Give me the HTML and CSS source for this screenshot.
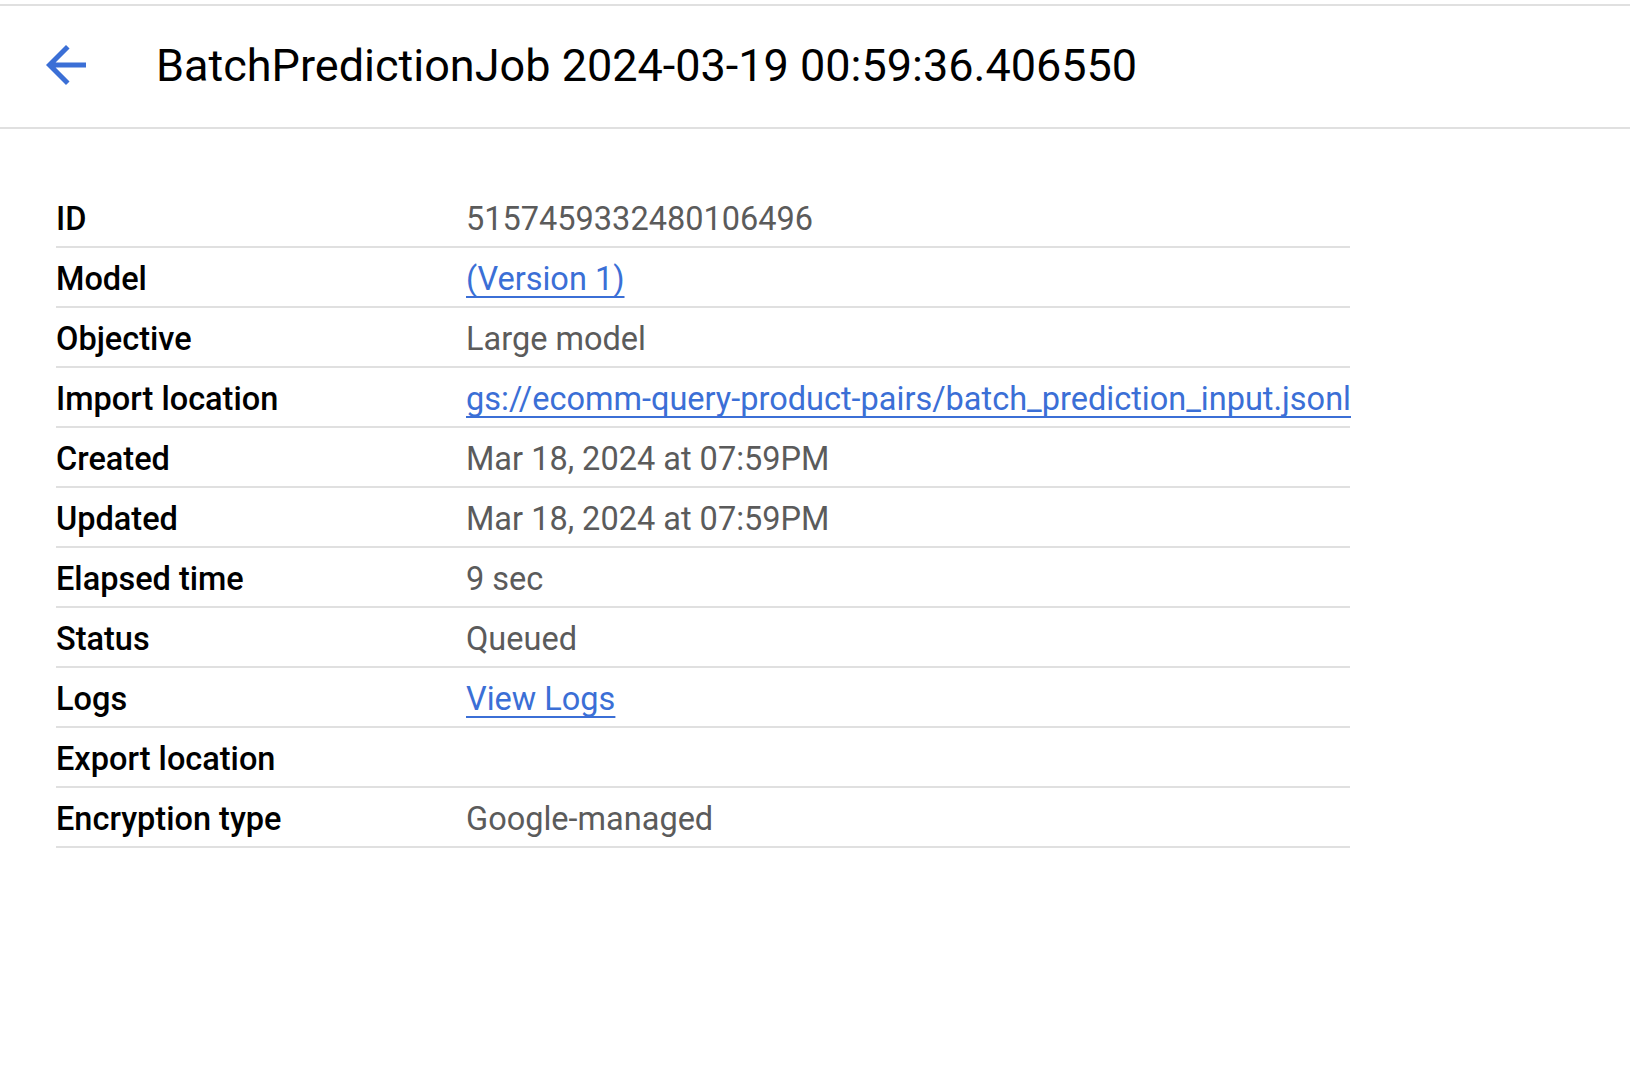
FILE: index.html
```html
<!DOCTYPE html>
<html lang="en">
<head>
<meta charset="utf-8">
<title>BatchPredictionJob</title>
<link rel="stylesheet" href="styles.css">
</head>
<body>
<header class="header">
  <a class="back" href="#" aria-label="Back">
    <svg viewBox="0 0 24 24" width="60" height="60"><path d="M20 11H7.83l5.59-5.59L12 4l-8 8 8 8 1.41-1.41L7.83 13H20v-2z" fill="#3b6fd6"/></svg>
  </a>
  <h1 class="title">BatchPredictionJob 2024-03-19 00:59:36.406550</h1>
</header>
<main class="content">
  <dl class="details">
    <div class="row"><dt>ID</dt><dd>5157459332480106496</dd></div>
    <div class="row"><dt>Model</dt><dd><a href="#">(Version 1)</a></dd></div>
    <div class="row"><dt>Objective</dt><dd>Large model</dd></div>
    <div class="row"><dt>Import location</dt><dd><a href="#">gs://ecomm-query-product-pairs/batch_prediction_input.jsonl</a></dd></div>
    <div class="row"><dt>Created</dt><dd>Mar 18, 2024 at 07:59PM</dd></div>
    <div class="row"><dt>Updated</dt><dd>Mar 18, 2024 at 07:59PM</dd></div>
    <div class="row"><dt>Elapsed time</dt><dd>9 sec</dd></div>
    <div class="row"><dt>Status</dt><dd>Queued</dd></div>
    <div class="row"><dt>Logs</dt><dd><a href="#">View Logs</a></dd></div>
    <div class="row"><dt>Export location</dt><dd></dd></div>
    <div class="row"><dt>Encryption type</dt><dd>Google-managed</dd></div>
  </dl>
</main>
</body>
</html>
```
FILE: styles.css
```css
html, body {
  margin: 0;
  padding: 0;
  background: #fff;
  font-family: Roboto, "Liberation Sans", Arial, sans-serif;
  color: #000;
}

.header {
  margin-top: 4px;
  border-top: 2px solid #e0e0e0;
  border-bottom: 2px solid #e0e0e0;
  height: 121px;
  display: flex;
  align-items: center;
}

.back {
  display: flex;
  width: 60px;
  height: 60px;
  margin-left: 36px;
  margin-right: 60px;
  margin-top: -3px;
}

.back svg {
  display: block;
}

.title {
  margin: 0;
  font-size: 45px;
  font-weight: 400;
  color: #000;
  margin-top: -2px;
}

.content {
  padding: 59px 0 0 56px;
}

.details {
  margin: 0;
  width: 1294px;
}

.row {
  display: flex;
  height: 53px;
  padding-top: 5px;
  border-bottom: 2px solid #e0e0e0;
  font-size: 32.5px;
  line-height: 53px;
}

.row dt {
  width: 410px;
  flex: none;
  font-weight: 500;
  color: #000;
}

.row dd {
  margin: 0;
  color: #5b5b5b;
  white-space: nowrap;
}

.row dd a {
  color: #3b6fd6;
  text-decoration: underline;
  text-decoration-thickness: 2px;
  text-underline-offset: 6px;
  text-decoration-skip-ink: none;
}
```
